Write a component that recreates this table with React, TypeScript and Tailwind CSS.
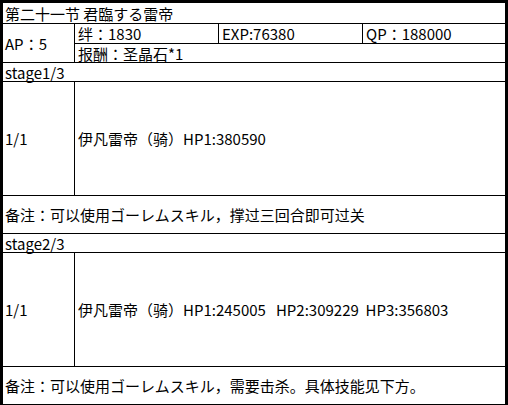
const font = { fontFamily: "'Noto Sans CJK SC', sans-serif" };

// YaHei-style colon sits in the middle of its box, the JP face does the same
function Colon() {
  return <span style={{ fontFamily: "'Noto Sans CJK JP', sans-serif" }}>：</span>;
}

function StageBlock({ stage, enemies, note }: { stage: string; enemies: string; note: React.ReactNode }) {
  return (
    <>
      <div className="flex h-[19px] items-center border-b border-black pl-[2px]">{stage}</div>
      <div className="flex h-[114px] border-b border-black">
        <div className="flex w-[72px] items-center border-r border-black pl-[2px]">1/1</div>
        <div className="flex flex-1 items-center whitespace-pre pl-[3px]">{enemies}</div>
      </div>
      <div className="flex h-[38px] items-center border-b border-black pl-[2px]">{note}</div>
    </>
  );
}

export default function App() {
  return (
    <div
      className="box-border h-[405px] w-[508px] border-x-[3px] border-t-[3px] border-black bg-white text-[15px] leading-none text-black"
      style={font}
    >
      <div className="flex h-[21px] items-center border-b border-black pl-[2px]">第二十一节 君臨する雷帝</div>
      <div className="flex h-[39px] border-b border-black">
        <div className="flex w-[72px] items-center border-r border-black pl-[2px]">
          AP<Colon />5
        </div>
        <div className="flex flex-1 flex-col">
          <div className="flex h-[20px] border-b border-black">
            <div className="flex w-[144px] items-center border-r border-black pl-[3px]">
              绊<Colon />1830
            </div>
            <div className="flex w-[144px] items-center border-r border-black pl-[3px]">EXP:76380</div>
            <div className="flex flex-1 items-center pl-[3px]">
              QP<Colon />188000
            </div>
          </div>
          <div className="flex flex-1 items-center pl-[3px]">
            报酬<Colon />圣晶石*1
          </div>
        </div>
      </div>
      <StageBlock
        stage="stage1/3"
        enemies="伊凡雷帝（骑）HP1:380590"
        note={<>备注<Colon />可以使用ゴーレムスキル，撑过三回合即可过关</>}
      />
      <StageBlock
        stage="stage2/3"
        enemies="伊凡雷帝（骑）HP1:245005   HP2:309229  HP3:356803"
        note={<>备注<Colon />可以使用ゴーレムスキル，需要击杀。具体技能见下方。</>}
      />
    </div>
  );
}
